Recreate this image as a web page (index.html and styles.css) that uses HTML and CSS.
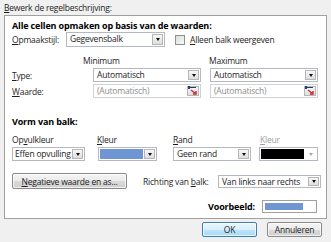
FILE: index.html
```html
<!DOCTYPE html>
<html lang="nl">
<head>
    <meta charset="UTF-8">
    <title>Bewerk de regelbeschrijving</title>
    <link rel="stylesheet" href="styles.css">
</head>
<body>
    <div class="dialog">
        <div class="caption"><u>B</u>ewerk de regelbeschrijving:</div>

        <div class="panel">
            <div class="heading">Alle cellen opmaken op basis van de waarden:</div>

            <div class="row row-style">
                <span class="lbl lbl-style"><u>O</u>pmaakstijl:</span>
                <div class="select sel-style">
                    <span class="val">Gegevensbalk</span>
                    <span class="drop"></span>
                </div>
                <span class="check"></span>
                <span class="check-lbl"><u>A</u>lleen balk weergeven</span>
            </div>

            <div class="row minmax">
                <span class="col-min">Minimum</span>
                <span>Maximum</span>
            </div>

            <div class="row row-field">
                <span class="lbl lbl-field"><u>T</u>ype:</span>
                <div class="select sel-field">
                    <span class="val">Automatisch</span>
                    <span class="drop"></span>
                </div>
                <div class="select sel-field sel-max">
                    <span class="val">Automatisch</span>
                    <span class="drop"></span>
                </div>
            </div>

            <div class="row row-field row-value">
                <span class="lbl lbl-field"><u>W</u>aarde:</span>
                <div class="select sel-field disabled">
                    <span class="val">(Automatisch)</span>
                    <span class="picker">
                        <svg width="10" height="10" viewBox="0 0 10 10">
                            <rect x="0" y="1" width="8" height="1" fill="#1f3d7a"/>
                            <rect x="0" y="0" width="2" height="3" fill="#1f3d7a"/>
                            <path d="M3 4 L8 8 M8 5 L8 8 L5 8" stroke="#d42a2a" stroke-width="1.4" fill="none"/>
                        </svg>
                    </span>
                </div>
                <div class="select sel-field sel-max disabled">
                    <span class="val">(Automatisch)</span>
                    <span class="picker">
                        <svg width="10" height="10" viewBox="0 0 10 10">
                            <rect x="0" y="1" width="8" height="1" fill="#1f3d7a"/>
                            <rect x="0" y="0" width="2" height="3" fill="#1f3d7a"/>
                            <path d="M3 4 L8 8 M8 5 L8 8 L5 8" stroke="#d42a2a" stroke-width="1.4" fill="none"/>
                        </svg>
                    </span>
                </div>
            </div>

            <div class="heading heading-shape">Vorm van balk:</div>

            <div class="row bar-labels">
                <span class="c-fill">Op<u>v</u>ulkleur</span>
                <span class="c-color"><u>K</u>leur</span>
                <span class="c-border"><u>R</u>and</span>
                <span class="c-bcolor muted"><u>K</u>leur</span>
            </div>

            <div class="row bar-fields">
                <div class="select s-fill">
                    <span class="val">Effen opvulling</span>
                    <span class="drop"></span>
                </div>
                <div class="select s-color">
                    <span class="swatch blue"></span>
                    <span class="drop"></span>
                </div>
                <div class="select s-border">
                    <span class="val">Geen rand</span>
                    <span class="drop"></span>
                </div>
                <div class="select s-bcolor">
                    <span class="swatch black"></span>
                    <span class="drop drop-off"></span>
                </div>
            </div>

            <div class="row row-buttons">
                <button class="btn btn-neg"><u>N</u>egatieve waarde en as...</button>
                <span class="dir-lbl">Richting van <u>b</u>alk:</span>
                <div class="select s-dir">
                    <span class="val">Van links naar rechts</span>
                    <span class="drop"></span>
                </div>
            </div>

            <div class="row row-preview">
                <span class="preview-lbl">Voorbeeld:</span>
                <div class="preview"><span class="preview-bar"></span></div>
            </div>
        </div>

        <div class="footer">
            <button class="btn btn-ok">OK</button>
            <button class="btn">Annuleren</button>
        </div>
    </div>
</body>
</html>
```

FILE: styles.css
```css
* {
    margin: 0;
    padding: 0;
    box-sizing: border-box;
}

body {
    background-color: #f0f0f0;
    color: #1e1e1e;
    font-family: 'Open Sans', 'Noto Sans', sans-serif;
    font-size: 8.5px;
    letter-spacing: -0.2px;
    width: 331px;
    height: 242px;
    overflow: hidden;
}

u {
    text-decoration-thickness: 1px;
    text-underline-offset: 1px;
}

.dialog {
    padding: 3px 4px 0 4px;
}

.caption {
    height: 12px;
    line-height: 10px;
}

.panel {
    height: 204px;
    background-color: #ffffff;
    border: 1px solid #a0a0a0;
    padding: 4px 0 0 7px;
}

.heading {
    font-weight: bold;
    font-size: 9px;
    letter-spacing: -0.15px;
    line-height: 12px;
    color: #000;
}

.heading-shape {
    margin-top: 18px;
}

.row {
    display: flex;
    align-items: center;
}

/* select boxes */
.select {
    display: flex;
    align-items: stretch;
    height: 14px;
    background-color: #ffffff;
    border: 1px solid #b4b9c0;
    padding: 1px;
}

.val {
    flex: 1;
    line-height: 10px;
    padding-left: 2px;
    white-space: nowrap;
    overflow: hidden;
}

.drop {
    width: 11px;
    flex-shrink: 0;
    border: 1px solid #b6b6b6;
    background: linear-gradient(#f7f7f7, #dedede);
    display: flex;
    align-items: center;
    justify-content: center;
}

.drop::after {
    content: '';
    border-left: 2.5px solid transparent;
    border-right: 2.5px solid transparent;
    border-top: 3px solid #111;
}

.drop-off {
    border-color: transparent;
    background: none;
}

.drop-off::after {
    border-top-color: #a8a8a8;
}

.picker {
    width: 12px;
    flex-shrink: 0;
    border: 1px solid #b6b6b6;
    background: linear-gradient(#f7f7f7, #dedede);
    display: flex;
    align-items: center;
    justify-content: center;
}

.disabled {
    border-color: #cfd3d8;
}

.disabled .val {
    color: #8d8d8d;
}

/* first row */
.row-style {
    height: 15px;
}

.row-style .select {
    height: 15px;
}

.lbl-style {
    width: 54px;
}

.sel-style {
    width: 99px;
}

.check {
    width: 10px;
    height: 10px;
    margin-left: 10px;
    border: 1px solid #8e8f8f;
    background: linear-gradient(135deg, #dcdcdc, #f9f9f9);
}

.check-lbl {
    margin-left: 5px;
}

/* min / max */
.minmax {
    margin-top: 7px;
    height: 12px;
    padding-left: 71px;
}

.col-min {
    width: 126px;
}

.row-field {
    margin-top: 2px;
}

.lbl-field {
    width: 81px;
}

.sel-field {
    width: 108px;
}

.sel-max {
    margin-left: 9px;
}

/* bar shape */
.bar-labels {
    margin-top: 5px;
    height: 12px;
}

.c-fill {
    width: 85px;
}

.c-color {
    width: 76px;
}

.c-border {
    width: 87px;
}

.muted {
    color: #a0a0a0;
}

.bar-fields {
    margin-top: 2px;
}

.s-fill {
    width: 73px;
}

.s-fill .val {
    padding-left: 1px;
}

.s-color {
    width: 59px;
    margin-left: 13px;
}

.s-border {
    width: 78px;
    margin-left: 16px;
}

.s-bcolor {
    width: 59px;
    margin-left: 8px;
}

.swatch {
    flex: 1;
    margin-right: 1px;
}

.blue {
    background-color: #6f95d3;
}

.black {
    background-color: #000000;
}

/* buttons */
.btn {
    font-family: inherit;
    font-size: 8.5px;
    letter-spacing: -0.2px;
    color: #1e1e1e;
    height: 15px;
    width: 55px;
    border: 1px solid #8a8a8a;
    border-radius: 2px;
    background: linear-gradient(#f4f4f4 0%, #ebebeb 50%, #dbdbdb 51%, #cfcfcf 100%);
    box-shadow: inset 0 0 0 1px rgba(255, 255, 255, 0.7);
}

.row-buttons {
    margin-top: 12px;
}

.btn-neg {
    width: 115px;
    height: 16px;
}

.dir-lbl {
    width: 75px;
    margin-left: 16px;
}

.s-dir {
    width: 103px;
    height: 13px;
}

.row-preview {
    margin-top: 11px;
    justify-content: flex-end;
    padding-right: 9px;
}

.preview-lbl {
    font-weight: bold;
    font-size: 9px;
    letter-spacing: -0.15px;
    color: #000;
}

.preview {
    width: 55px;
    height: 13px;
    margin-left: 7px;
    border: 1px solid #a0a0a0;
    padding: 2px;
    display: flex;
}

.preview-bar {
    width: 38px;
    background-color: #6f95d3;
}

.footer {
    display: flex;
    justify-content: flex-end;
    gap: 10px;
    margin-top: 3px;
    padding-right: 5px;
}

.btn-ok {
    border-color: #3c7fb1;
    background: linear-gradient(#eaf6fd 0%, #d9f0fc 50%, #bee6fd 51%, #a7d9f5 100%);
}
```
